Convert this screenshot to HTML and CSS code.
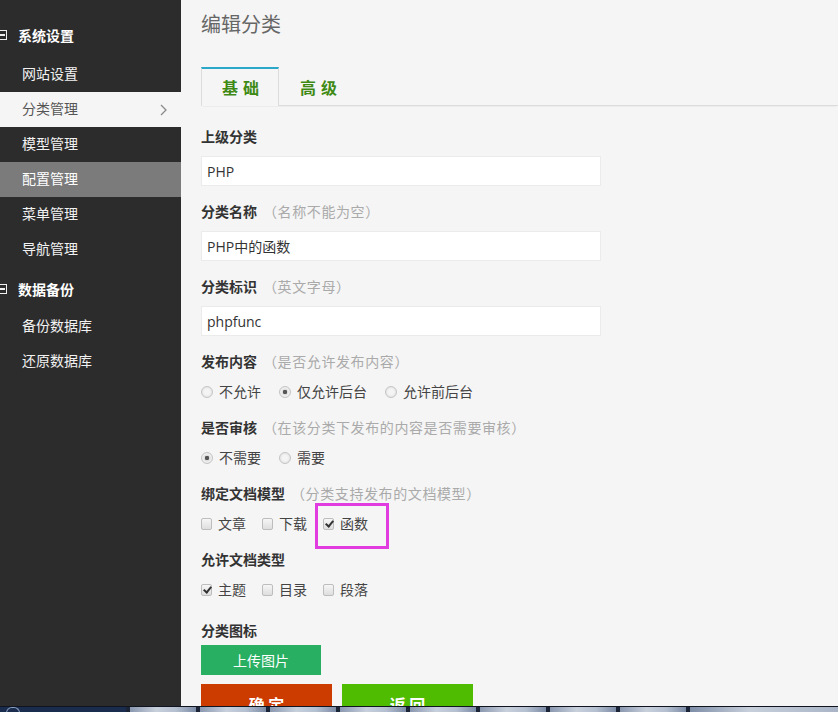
FILE: index.html
```html
<!DOCTYPE html>
<html lang="zh-CN">
<head>
<meta charset="utf-8">
<title>编辑分类</title>
<link rel="stylesheet" href="styles.css">
</head>
<body>
<div class="app">
  <aside class="sidebar">
    <div class="group">
      <div class="group-title"><span class="fold-icon"></span>系统设置</div>
      <a class="nav-item">网站设置</a>
      <a class="nav-item active">分类管理<svg class="chev" width="7" height="12" viewBox="0 0 7 12"><polyline points="1,1 6,6 1,11" fill="none" stroke="#8a8a8a" stroke-width="1.3"/></svg></a>
      <a class="nav-item">模型管理</a>
      <a class="nav-item hover">配置管理</a>
      <a class="nav-item">菜单管理</a>
      <a class="nav-item">导航管理</a>
    </div>
    <div class="group group-second">
      <div class="group-title"><span class="fold-icon"></span>数据备份</div>
      <a class="nav-item">备份数据库</a>
      <a class="nav-item">还原数据库</a>
    </div>
  </aside>

  <main class="main">
    <h1 class="page-title">编辑分类</h1>
    <div class="tabs">
      <div class="tab active">基础</div>
      <div class="tab">高级</div>
    </div>

    <form class="form">
      <div class="field">
        <div class="label">上级分类</div>
        <input class="text-input" type="text" value="PHP">
      </div>
      <div class="field">
        <div class="label">分类名称<span class="hint">（名称不能为空）</span></div>
        <input class="text-input" type="text" value="PHP中的函数">
      </div>
      <div class="field">
        <div class="label">分类标识<span class="hint">（英文字母）</span></div>
        <input class="text-input" type="text" value="phpfunc">
      </div>
      <div class="field">
        <div class="label">发布内容<span class="hint">（是否允许发布内容）</span></div>
        <div class="choices radios">
          <label class="choice"><input class="radio" type="radio" name="pub"><span>不允许</span></label>
          <label class="choice"><input class="radio" type="radio" name="pub" checked><span>仅允许后台</span></label>
          <label class="choice"><input class="radio" type="radio" name="pub"><span>允许前后台</span></label>
        </div>
      </div>
      <div class="field">
        <div class="label">是否审核<span class="hint">（在该分类下发布的内容是否需要审核）</span></div>
        <div class="choices radios">
          <label class="choice"><input class="radio" type="radio" name="check" checked><span>不需要</span></label>
          <label class="choice"><input class="radio" type="radio" name="check"><span>需要</span></label>
        </div>
      </div>
      <div class="field">
        <div class="label">绑定文档模型<span class="hint">（分类支持发布的文档模型）</span></div>
        <div class="choices checks">
          <label class="choice"><input class="checkbox" type="checkbox"><span>文章</span></label>
          <label class="choice"><input class="checkbox" type="checkbox"><span>下载</span></label>
          <label class="choice marked"><input class="checkbox" type="checkbox" checked><span>函数</span></label>
        </div>
      </div>
      <div class="field">
        <div class="label">允许文档类型</div>
        <div class="choices checks">
          <label class="choice"><input class="checkbox" type="checkbox" checked><span>主题</span></label>
          <label class="choice"><input class="checkbox" type="checkbox"><span>目录</span></label>
          <label class="choice"><input class="checkbox" type="checkbox"><span>段落</span></label>
        </div>
      </div>
      <div class="field field-icon">
        <div class="label">分类图标</div>
        <button class="btn-upload" type="button">上传图片</button>
      </div>
      <div class="actions">
        <button class="btn btn-submit" type="button">确 定</button>
        <button class="btn btn-back" type="button">返 回</button>
      </div>
    </form>
  </main>
</div>

<div class="taskbar">
  <div class="start"><span class="orb"></span></div>
  <div class="task"></div>
  <div class="task"></div>
  <div class="task"></div>
  <div class="task"></div>
  <div class="task"></div>
  <div class="task"></div>
  <div class="task"></div>
  <div class="task"></div>
  <div class="task-rest"></div>
</div>
</body>
</html>
```

FILE: styles.css
```css
*, *::before, *::after { box-sizing: border-box; }

html, body {
  margin: 0;
  padding: 0;
  height: 100%;
  overflow: hidden;
}

body {
  font-family: "Open Sans", "Noto Sans CJK SC", sans-serif;
  font-size: 14px;
  color: #333;
  background: #f5f5f5;
}

.app {
  display: flex;
  height: 712px;
}

/* Sidebar */
.sidebar {
  width: 181px;
  flex: none;
  background: #2c2c2c;
  padding-top: 15px;
  font-family: "Noto Sans CJK SC", sans-serif;
}

.group-second { margin-top: 2px; }

.group-title {
  display: flex;
  align-items: center;
  height: 40px;
  color: #fff;
  font-weight: bold;
  font-size: 14px;
}

.fold-icon {
  position: relative;
  width: 10px;
  height: 10px;
  margin-left: -3px;
  margin-right: 11px;
  border: 1.5px solid #f0f0f0;
}

.fold-icon::after {
  content: "";
  position: absolute;
  left: 1px;
  right: 1px;
  top: 3px;
  height: 1.5px;
  background: #f0f0f0;
}

.nav-item {
  display: flex;
  align-items: center;
  height: 35px;
  padding-left: 22px;
  padding-right: 14px;
  padding-bottom: 3px;
  color: #f2f2f2;
  font-size: 14px;
  text-decoration: none;
}

.group:first-child .nav-item:first-of-type { height: 37px; padding-top: 2px; }

.nav-item.active {
  background: #f5f5f5;
  color: #555;
}

.nav-item.hover {
  background: #7b7b7b;
  color: #fff;
}

.chev { margin-left: auto; margin-top: 3px; }

/* Main */
.main {
  flex: 1;
  padding: 10px 0 0 20px;
  min-width: 0;
}

.page-title {
  margin: 0;
  font-size: 20px;
  line-height: 28px;
  font-weight: normal;
  color: #666;
  font-family: "Noto Sans CJK SC", sans-serif;
}

.tabs {
  display: flex;
  margin-top: 29px;
  height: 39px;
  border-bottom: 1px solid #dcdcdc;
  box-shadow: 0 3px 0 -2px #ececec;
}

.tab {
  height: 38px;
  line-height: 36px;
  padding: 0 15px 0 21px;
  font-size: 16px;
  font-weight: bold;
  letter-spacing: 5px;
  color: #3f8a14;
  border-top: 2px solid transparent;
  font-family: "Noto Sans CJK SC", sans-serif;
}

.tab.active {
  border-top-color: #2aa7c9;
  border-left: 1px solid #dcdcdc;
  border-right: 1px solid #dcdcdc;
  background: #f5f5f5;
  height: 39px;
  padding-left: 20px;
  padding-right: 14px;
}

/* Form */
.form {
  padding-top: 20px;
}

.field { margin-bottom: 15px; }

.label {
  line-height: 20px;
  height: 20px;
  margin-bottom: 10px;
  font-weight: bold;
  font-size: 14px;
  color: #333;
  font-family: "Noto Sans CJK SC", sans-serif;
}

.hint {
  margin-left: 6px;
  font-weight: normal;
  font-size: 14px;
  letter-spacing: 0.6px;
  color: #aaa;
  text-spacing-trim: space-all;
}

.text-input {
  display: block;
  width: 400px;
  height: 30px;
  padding: 0 5px;
  border: 1px solid #ebebeb;
  background: #fff;
  font-family: "Open Sans", "Noto Sans CJK SC", sans-serif;
  font-size: 14px;
  color: #333;
  outline: none;
}

.choices {
  display: flex;
  height: 21px;
  align-items: center;
}

.radios { gap: 18px; }
.checks { gap: 16px; }

.choice {
  display: flex;
  align-items: center;
  font-size: 14px;
  color: #444;
  font-family: "Noto Sans CJK SC", sans-serif;
  line-height: 21px;
}

.radio {
  appearance: none;
  -webkit-appearance: none;
  margin: 0 6px 0 0;
  width: 12px;
  height: 12px;
  border-radius: 50%;
  border: 1px solid #c4c4c4;
  background: radial-gradient(circle at 50% 50%, #f4f4f4 0, #f4f4f4 35%, #dcdcdc 100%);
  position: relative;
}

.radio:checked {
  background: radial-gradient(circle at 50% 50%, #555 0, #555 28%, #dcdcdc 34%, #f0f0f0 60%, #d8d8d8 100%);
}

.checkbox {
  appearance: none;
  -webkit-appearance: none;
  margin: 0 6px 0 0;
  width: 11px;
  height: 12px;
  border-radius: 2px;
  border: 1px solid #bdbdbd;
  background: linear-gradient(#f6f6f6, #dedede);
  position: relative;
}

.checkbox:checked::after {
  content: "";
  position: absolute;
  left: 3px;
  top: 0px;
  width: 5px;
  height: 8px;
  border: solid #333;
  border-width: 0 2px 2px 0;
  transform: rotate(40deg);
}

.marked { position: relative; }

.marked::after {
  content: "";
  position: absolute;
  left: -8px;
  top: -10px;
  width: 74px;
  height: 46px;
  border: 3px solid #e03ce0;
  pointer-events: none;
}

.field-icon { margin-top: 20px; margin-bottom: 0; }
.field-icon .label { margin-bottom: 5px; }

.btn-upload {
  display: block;
  width: 120px;
  height: 30px;
  border: none;
  background: #28af62;
  color: #fff;
  font-size: 14px;
  font-family: "Noto Sans CJK SC", sans-serif;
  padding: 0;
}

.actions {
  display: flex;
  gap: 10px;
  margin-top: 9px;
}

.btn {
  width: 131px;
  height: 40px;
  border: none;
  color: #fff;
  font-size: 16px;
  font-weight: bold;
  font-family: "Noto Sans CJK SC", sans-serif;
  padding: 0;
}

.btn-submit { background: #cc3c00; }
.btn-back { background: #4fbb01; }

/* Taskbar */
.taskbar {
  position: fixed;
  left: 0;
  right: 0;
  bottom: 0;
  height: 6px;
  display: flex;
  gap: 4px;
  background: #1c2438;
  border-top: 1px solid #10141e;
}

.start {
  width: 126px;
  background: #1b2d4e;
  position: relative;
}

.orb {
  position: absolute;
  left: 6px;
  top: 0;
  width: 14px;
  height: 6px;
  border-radius: 7px 7px 0 0;
  border: 1px solid #8aa0c0;
  border-bottom: none;
}

.task {
  width: 66px;
  background: linear-gradient(90deg, #8a98b0, #c8d0dc 40%, #b4bfd0 70%, #7d8ca6);
}

.task-rest {
  flex: 1;
  background: linear-gradient(90deg, #7e8ea8, #c7cfdb 40%, #a9b5c7);
}
```
